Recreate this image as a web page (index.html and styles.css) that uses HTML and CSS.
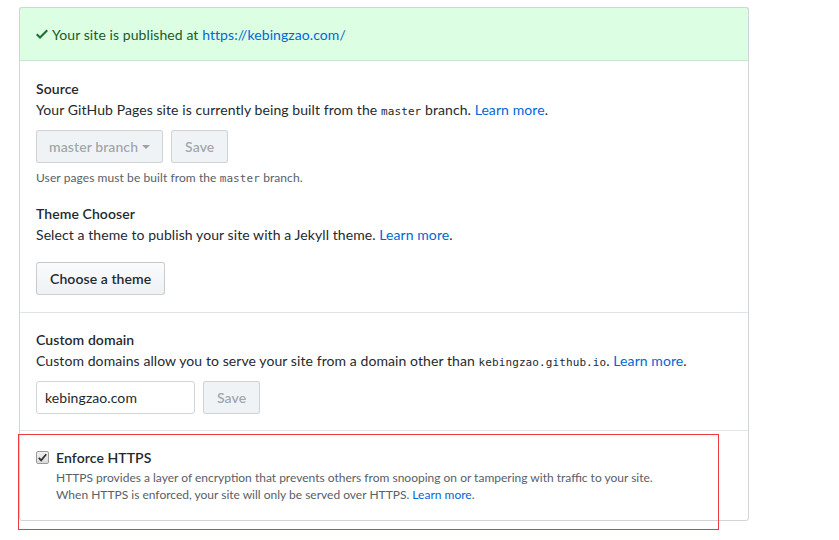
FILE: index.html
```html
<!DOCTYPE html>
<html>
<head>
<meta charset="utf-8">
<link rel="stylesheet" href="styles.css">
</head>
<body>
<div class="page">
  <div class="box">
    <div class="flash">
      <svg class="check" width="12" height="16" viewBox="0 0 12 16"><path d="M12 5l-8 8-4-4 1.5-1.5L4 10l6.5-6.5L12 5z"/></svg>
      <span>Your site is published at <a href="#">https://kebingzao.com/</a></span>
    </div>
    <div class="section first">
      <h3 class="title">Source</h3>
      <p class="desc">Your GitHub Pages site is currently being built from the <code>master</code> branch. <a href="#">Learn more</a>.</p>
      <div class="row">
        <span class="btn disabled btn-select">master branch <i class="caret"></i></span>
        <span class="btn disabled">Save</span>
      </div>
      <p class="note">User pages must be built from the <code>master</code> branch.</p>
      <h3 class="title theme-title">Theme Chooser</h3>
      <p class="desc">Select a theme to publish your site with a Jekyll theme. <a href="#">Learn more</a>.</p>
      <div class="row theme-row">
        <span class="btn">Choose a theme</span>
      </div>
    </div>
    <div class="section">
      <h3 class="title">Custom domain</h3>
      <p class="desc">Custom domains allow you to serve your site from a domain other than <code>kebingzao.github.io</code>. <a href="#">Learn more</a>.</p>
      <div class="row domain-row">
        <span class="input">kebingzao.com</span>
        <span class="btn disabled">Save</span>
      </div>
    </div>
    <div class="section https">
      <div class="https-row">
        <span class="cb"><svg width="9" height="9" viewBox="0 0 9 9"><path d="M0.8 4.8l2.4 2.6L8.2 1.3" fill="none" stroke="#333" stroke-width="1.8"/></svg></span>
        <div>
          <div class="https-title">Enforce HTTPS</div>
          <p class="https-note">HTTPS provides a layer of encryption that prevents others from snooping on or tampering with traffic to your site.<br>When HTTPS is enforced, your site will only be served over HTTPS. <a href="#">Learn more</a>.</p>
        </div>
      </div>
    </div>
  </div>
  <div class="highlight"></div>
</div>
</body>
</html>
```
FILE: styles.css
```css
* { box-sizing: border-box; }
html, body { margin: 0; padding: 0; background: #fff; }
body {
  font-family: Lato, "Noto Sans", sans-serif;
  font-size: 14px;
  line-height: 21px;
  letter-spacing: 0.08px;
  color: #24292e;
}
a { color: #0366d6; text-decoration: none; }
code { font-family: "DejaVu Sans Mono", monospace; font-size: 11px; letter-spacing: 0.1px; }
.page { position: relative; padding: 7px 0 20px 19px; }
.box {
  width: 730px;
  border: 1px solid #d1d5da;
  border-radius: 3px;
}
.flash {
  height: 54px;
  display: flex;
  align-items: center;
  padding: 0 16px;
  background: #dcffe4;
  color: #165c26;
  border-bottom: 1px solid #c6e6cd;
  margin: -1px -1px 0;
  border-left: 1px solid #d1d5da;
  border-right: 1px solid #d1d5da;
  border-top: 1px solid #d1d5da;
  border-radius: 3px 3px 0 0;
}
.check { fill: #1e6e31; margin-right: 4px; }
.section { padding: 16px 16px 16px; border-top: 1px solid #e1e4e8; }
.section.first { border-top: 0; padding-top: 17px; padding-bottom: 17px; }
.title { margin: 0; font-size: 14px; font-weight: 600; line-height: 21px; }
.desc { margin: 0; }
.row { display: flex; gap: 8px; margin-top: 8px; }
.btn {
  display: inline-flex;
  align-items: center;
  height: 33px;
  padding: 0 13px;
  border: 1px solid rgba(27,31,35,0.2);
  border-radius: 3px;
  background: linear-gradient(#fafbfc, #eff3f6 90%);
  color: #24292e;
  font-weight: 600;
}
.btn.disabled {
  background: #eff3f6;
  color: rgba(36,41,46,0.4);
  border-color: rgba(27,31,35,0.15);
}
.btn-select { padding: 0 12px; }
.caret {
  display: inline-block;
  width: 0; height: 0;
  margin-left: 4px;
  border-top: 4px solid rgba(36,41,46,0.4);
  border-left: 4px solid transparent;
  border-right: 4px solid transparent;
}
.note { margin: 6px 0 0; font-size: 12px; line-height: 18px; color: #586069; }
.theme-title { margin-top: 15px; }
.theme-row { margin-top: 17px; }
.domain-row { margin-top: 8px; }
.input {
  display: inline-flex;
  align-items: center;
  width: 159px;
  height: 33px;
  padding: 0 8px;
  border: 1px solid #d1d5da;
  border-radius: 3px;
  background: #fff;
  color: #24292e;
}
.https { padding-top: 16px; padding-bottom: 17px; }
.https-row { display: flex; gap: 7px; }
.cb {
  flex: none;
  width: 13px; height: 13px;
  margin-top: 4px;
  border: 1px solid #9a9a9a;
  border-radius: 2px;
  background: linear-gradient(#f0f0f0, #dcdcdc);
  display: flex; align-items: center; justify-content: center;
}
.https-title { font-weight: 600; }
.https-note { margin: 1px 0 0; font-size: 12px; line-height: 17px; letter-spacing: 0; color: #586069; }
.highlight {
  position: absolute;
  left: 18px; top: 434px;
  width: 701px; height: 96px;
  border: 1px solid #ee3b3f;
}
```
